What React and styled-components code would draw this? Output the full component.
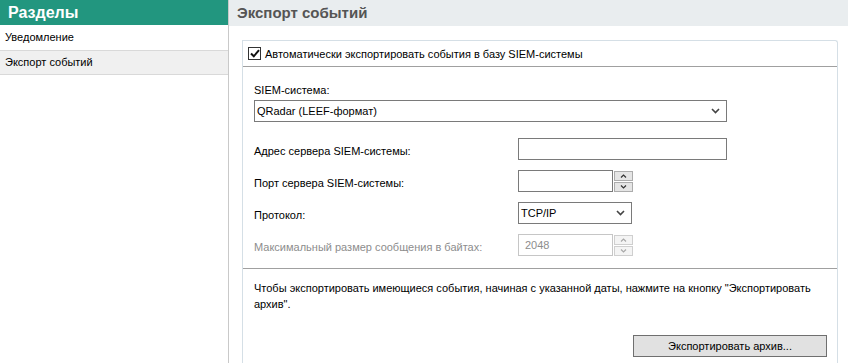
import React from 'react';
import styled, { createGlobalStyle } from 'styled-components';

const Global = createGlobalStyle`
  html, body {
    margin: 0;
    padding: 0;
    background: #fff;
    overflow: hidden;
  }
  body {
    font-family: Tahoma, "Liberation Sans", "DejaVu Sans", sans-serif;
    font-size: 11px;
    color: #000;
  }
`;

const Layout = styled.div`
  display: grid;
  grid-template-columns: 229px 1fr;
  width: 848px;
  height: 363px;
`;

const Sidebar = styled.aside`
  border-right: 1px solid #c9c9c9;
  background: #fff;
`;

const SideHeader = styled.div`
  height: 25px;
  background: #22967f;
  color: #fff;
  font-weight: bold;
  font-size: 16px;
  line-height: 25px;
  padding-left: 8px;
`;

const SideItem = styled.div`
  height: 23px;
  line-height: 23px;
  padding-left: 5px;
  background: ${p => (p.active ? '#f0f0f0' : '#fff')};
  border-top: 1px solid ${p => (p.active ? '#d9d9d9' : 'transparent')};
  border-bottom: 1px solid ${p => (p.active ? '#d9d9d9' : 'transparent')};
`;

const Main = styled.main`
  display: flex;
  flex-direction: column;
  min-width: 0;
`;

const MainHeader = styled.div`
  height: 26px;
  background: #e9edef;
  color: #555;
  font-weight: bold;
  font-size: 15px;
  line-height: 25px;
  padding-left: 8px;
`;

const Panel = styled.section`
  margin: 14px 0 0 13px;
  width: 594px;
  flex: 1;
  border: 1px solid #d5dfe6;
  border-bottom: none;
  border-top-right-radius: 3px;
`;

const CheckRow = styled.label`
  display: flex;
  align-items: center;
  gap: 4px;
  height: 25px;
  padding-left: 5px;
  border-bottom: 1px solid #a0a0a0;
`;

const CheckBox = styled.span`
  width: 11px;
  height: 11px;
  border: 1px solid #333;
  background: #fff;
  display: flex;
  align-items: center;
  justify-content: center;
`;

const Section = styled.div`
  padding: 12px 11px 0 11px;
  border-bottom: ${p => (p.divider ? '1px solid #a0a0a0' : 'none')};
`;

const Caption = styled.div`
  height: 20px;
  line-height: 20px;
  margin-top: 1px;
`;

const Select = styled.div`
  box-sizing: border-box;
  width: ${p => p.w}px;
  height: 22px;
  border: 1px solid #7a7a7a;
  display: flex;
  align-items: center;
  justify-content: space-between;
  padding: 0 6px 0 2px;
  background: #fff;
`;

const Form = styled.div`
  display: grid;
  grid-template-columns: 264px auto;
  grid-auto-rows: 22px;
  row-gap: 10px;
  align-items: center;
  margin-top: 16px;
  padding-bottom: 12px;
`;

const Label = styled.div`
  color: ${p => (p.disabled ? '#8d8d8d' : '#000')};
  padding-top: 3px;
`;

const TextInput = styled.div`
  box-sizing: border-box;
  width: ${p => p.w}px;
  height: 22px;
  border: 1px solid #7a7a7a;
  background: #fff;
`;

const Spin = styled.div`
  display: flex;
  height: 22px;
`;

const SpinField = styled.div`
  box-sizing: border-box;
  width: 95px;
  height: 22px;
  border: 1px solid ${p => (p.disabled ? '#c6c6c6' : '#7a7a7a')};
  color: ${p => (p.disabled ? '#8d8d8d' : '#000')};
  padding: 4px 0 0 6px;
  background: #fff;
`;

const SpinButtons = styled.div`
  display: flex;
  flex-direction: column;
  gap: 1px;
  margin-left: 1px;
  padding-top: 1px;
`;

const SpinButton = styled.div`
  box-sizing: border-box;
  width: 19px;
  height: 10px;
  background: ${p => (p.disabled ? '#f4f4f4' : '#e5e5e5')};
  border: 1px solid ${p => (p.disabled ? '#cfcfcf' : '#acacac')};
  display: flex;
  align-items: center;
  justify-content: center;
`;

const Note = styled.p`
  margin: 0;
  padding: 11px 11px 0 11px;
  line-height: 16px;
`;

const ButtonRow = styled.div`
  display: flex;
  justify-content: flex-end;
  padding: 23px 10px 0 0;
`;

const Button = styled.button`
  width: 194px;
  height: 22px;
  background: #e1e1e1;
  border: 1px solid #6f6f6f;
  font: inherit;
  color: #000;
  padding: 0;
`;

const Chevron = ({ color = '#444' }) => (
  <svg width="9" height="6" viewBox="0 0 9 6">
    <path d="M1 1 L4.5 4.5 L8 1" stroke={color} strokeWidth="1.6" fill="none" />
  </svg>
);

const Arrow = ({ up, color }) => (
  <svg width="7" height="4" viewBox="0 0 7 4">
    <path d={up ? 'M1 3.5 L3.5 1 L6 3.5' : 'M1 0.5 L3.5 3 L6 0.5'} stroke={color} strokeWidth="1.2" fill="none" />
  </svg>
);

const Spinner = ({ value, disabled }) => {
  const c = disabled ? '#a8a8a8' : '#333';
  return (
    <Spin>
      <SpinField disabled={disabled}>{value}</SpinField>
      <SpinButtons>
        <SpinButton disabled={disabled}><Arrow up color={c} /></SpinButton>
        <SpinButton disabled={disabled}><Arrow color={c} /></SpinButton>
      </SpinButtons>
    </Spin>
  );
};

export default function App() {
  return (
    <Layout>
      <Global />
      <Sidebar>
        <SideHeader>Разделы</SideHeader>
        <SideItem>Уведомление</SideItem>
        <SideItem active>Экспорт событий</SideItem>
      </Sidebar>
      <Main>
        <MainHeader>Экспорт событий</MainHeader>
        <Panel>
          <CheckRow>
            <CheckBox>
              <svg width="10" height="9" viewBox="0 0 10 9">
                <path d="M1 4.5 L3.8 7.3 L9 1.2" stroke="#111" strokeWidth="2" fill="none" />
              </svg>
            </CheckBox>
            Автоматически экспортировать события в базу SIEM-системы
          </CheckRow>
          <Section divider>
            <Caption>SIEM-система:</Caption>
            <Select w={473}>
              <span>QRadar (LEEF-формат)</span>
              <Chevron />
            </Select>
            <Form>
              <Label>Адрес сервера SIEM-системы:</Label>
              <TextInput w={209} />
              <Label>Порт сервера SIEM-системы:</Label>
              <Spinner value="" />
              <Label>Протокол:</Label>
              <Select w={114}>
                <span>TCP/IP</span>
                <Chevron />
              </Select>
              <Label disabled>Максимальный размер сообщения в байтах:</Label>
              <Spinner value="2048" disabled />
            </Form>
          </Section>
          <Note>
            Чтобы экспортировать имеющиеся события, начиная с указанной даты, нажмите на кнопку "Экспортировать архив".
          </Note>
          <ButtonRow>
            <Button>Экспортировать архив...</Button>
          </ButtonRow>
        </Panel>
      </Main>
    </Layout>
  );
}
